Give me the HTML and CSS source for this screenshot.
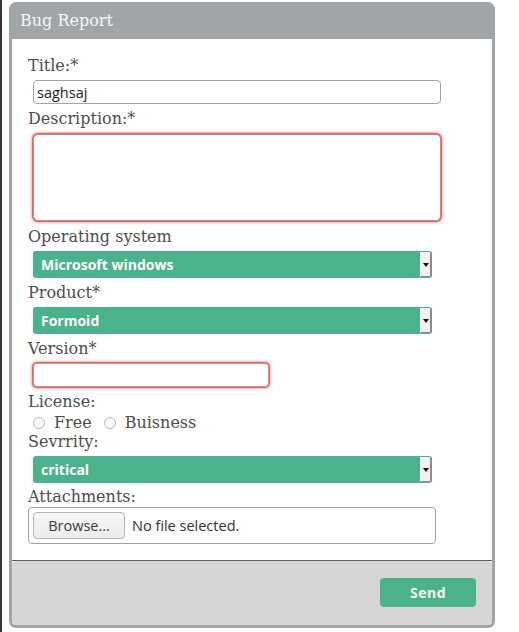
FILE: index.html
```html
<!DOCTYPE html>
<html>
<head>
<meta charset="utf-8">
<link rel="stylesheet" href="styles.css">
</head>
<body>
<div class="frame">
  <form class="panel">
    <div class="panel-head">Bug Report</div>
    <div class="panel-body">
      <label class="lbl">Title:*</label>
      <input class="text title" type="text" value="saghsaj">
      <label class="lbl">Description:*</label>
      <textarea class="area invalid"></textarea>
      <label class="lbl">Operating system</label>
      <div class="select-wrap"><select class="select"><option>Microsoft windows</option></select><span class="arrow"></span></div>
      <label class="lbl">Product*</label>
      <div class="select-wrap"><select class="select"><option>Formoid</option></select><span class="arrow"></span></div>
      <label class="lbl">Version*</label>
      <input class="text version invalid" type="text">
      <label class="lbl">License:</label>
      <div class="radios">
        <span class="radio"></span><span class="rtext">Free</span>
        <span class="radio second"></span><span class="rtext">Buisness</span>
      </div>
      <label class="lbl sev">Sevrrity:</label>
      <div class="select-wrap"><select class="select"><option>critical</option></select><span class="arrow"></span></div>
      <label class="lbl att">Attachments:</label>
      <div class="file"><span class="browse">Browse…</span><span class="nofile">No file selected.</span></div>
    </div>
    <div class="panel-foot">
      <button class="send" type="button">Send</button>
    </div>
  </form>
</div>
</body>
</html>
```
FILE: styles.css
```css
html, body { margin: 0; padding: 0; background: #fff; }
body { width: 519px; height: 632px; overflow: hidden; }
.frame {
  border-left: 2px solid #3a3434;
  height: 632px;
  box-sizing: border-box;
  padding: 2px 0 0 7px;
}
.panel {
  width: 486px;
  margin: 0;
  background: #fff;
  border-radius: 8px 8px 7px 7px;
  border: 3px solid #a2a5a8;
  border-top: 0;
  box-sizing: border-box;
}
.panel-head {
  height: 37px;
  margin: 0 -3px;
  background: #a2a5a8;
  border-radius: 8px 8px 0 0;
  color: #f3f6fb;
  font: 16px/38px "DejaVu Serif", serif;
  padding-left: 11px;
}
.panel-body {
  padding: 17px 16px 16px 16px;
  display: flex;
  flex-direction: column;
  align-items: flex-start;
  border-bottom: 1px solid #5e5e5e;
}
.lbl {
  display: block;
  font: 16px/20px "DejaVu Serif", serif;
  color: #4d4d4d;
  margin-top: 5px;
}
.lbl:first-child { margin-top: 0; }
.text {
  box-sizing: border-box;
  margin: 4px 0 0 5px;
  height: 24px;
  border: 1px solid #a3a3a3;
  border-radius: 4px;
  padding: 0 3px;
  font: 14.5px "Open Sans", sans-serif;
  color: #222;
  background: #fff;
  outline: none;
}
.title { width: 408px; }
.version { width: 236px; }
.area {
  box-sizing: border-box;
  margin: 5px 0 0 5px;
  width: 408px;
  height: 87px;
  border: 1px solid #9a9a9a;
  border-radius: 5px;
  resize: none;
  outline: none;
}
.invalid {
  box-shadow: 0 0 0 1px #ff5b5b, 0 0 2px 2px rgba(255, 110, 110, 0.55);
}
.area + .lbl { margin-top: 6px; }
.select-wrap {
  position: relative;
  margin: 4px 0 0 5px;
  width: 399px;
  height: 27px;
}
.select {
  -webkit-appearance: none;
  appearance: none;
  width: 100%;
  height: 27px;
  border: 0;
  border-radius: 3px;
  background: #4bb28c;
  color: #fff;
  font: 700 14px "Open Sans", sans-serif;
  padding: 0 0 0 8px;
  outline: none;
}
.arrow {
  position: absolute;
  right: 0;
  top: 1px;
  width: 12px;
  height: 25px;
  box-sizing: border-box;
  background: #f1f1f1;
  border-right: 2px solid #8c8c8c;
  border-bottom: 1px solid #8c8c8c;
  border-left: 1px solid #fafafa;
  border-radius: 0 2px 2px 0;
}
.arrow::after {
  content: "";
  position: absolute;
  left: 2px;
  top: 11px;
  border-left: 3px solid transparent;
  border-right: 3px solid transparent;
  border-top: 4px solid #111;
}
.radios {
  display: flex;
  align-items: center;
  margin-top: 1px;
  height: 19px;
  font: 16px/19px "DejaVu Serif", serif;
  color: #4d4d4d;
}
.radio {
  width: 12px;
  height: 12px;
  box-sizing: border-box;
  border: 1px solid #b8b8b8;
  border-radius: 50%;
  background: #fbfbfb;
  margin: 1px 0 0 5px;
}
.radio.second { margin-left: 12px; }
.rtext { margin-left: 9px; }
.lbl.sev { margin-top: 0; }
.lbl.att { margin-top: 4px; }
.file {
  box-sizing: border-box;
  width: 408px;
  height: 37px;
  border: 1px solid #a3a3a3;
  border-radius: 4px;
  display: flex;
  align-items: center;
  padding-left: 4px;
  font: 14.5px "Open Sans", sans-serif;
  color: #333;
}
.browse {
  box-sizing: border-box;
  width: 92px;
  height: 27px;
  border: 1px solid #b5b5b5;
  border-radius: 4px;
  background: linear-gradient(#f7f7f7, #ececec);
  text-align: center;
  line-height: 25px;
  color: #3c3c3c;
}
.nofile { margin-left: 7px; }
.panel-foot {
  background: #d6d6d6;
  border-radius: 4px;
  height: 64px;
  display: flex;
  justify-content: flex-end;
  align-items: flex-start;
  padding: 17px 16px 0 0;
  box-sizing: border-box;
}
.send {
  width: 96px;
  height: 29px;
  border: 0;
  border-radius: 4px;
  background: #4bb28c;
  color: #fff;
  font: 700 14px "Open Sans", sans-serif;
  letter-spacing: 0.5px;
}
```
